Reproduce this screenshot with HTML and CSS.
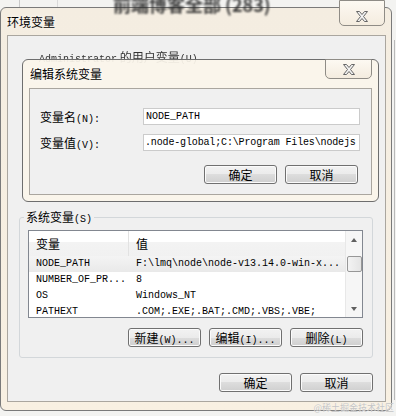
FILE: index.html
```html
<!DOCTYPE html>
<html lang="zh-CN">
<head>
    <meta charset="UTF-8">
    <meta name="viewport" content="width=device-width, initial-scale=1.0">
    <title>环境变量</title>
    <link rel="stylesheet" href="styles.css">
</head>
<body>
    <div class="desk">
        <!-- 背后窗口的模糊文字 -->
        <div class="behind">前端博客全部 (283)</div>

        <!-- 环境变量 窗口 -->
        <div class="win">
            <div class="win_title">环境变量</div>
            <div class="close close_big">
                <svg width="14" height="11" viewBox="0 0 14 11"><path d="M1.5 0.5h3l2.5 3 2.5-3h3l-4 5 4 5h-3l-2.5-3-2.5 3h-3l4-5z" fill="#f2f2f2" stroke="#666" stroke-width="1"/></svg>
            </div>
            <div class="client">
                <div class="user_area">
                    <div class="user_label"><span class="en">Administrator</span> 的用户变量<span class="en">(U)</span></div>
                </div>

                <div class="group">
                    <div class="legend">系统变量<span class="en">(S)</span></div>
                    <div class="list">
                        <div class="list_body">
                            <div class="list_head">
                                <div class="col1">变量</div>
                                <div class="col2">值</div>
                            </div>
                            <div class="row sel">
                                <div class="col1 en">NODE_PATH</div>
                                <div class="col2 en">F:\lmq\node\node-v13.14.0-win-x...</div>
                            </div>
                            <div class="row">
                                <div class="col1 en">NUMBER_OF_PR...</div>
                                <div class="col2 en">8</div>
                            </div>
                            <div class="row">
                                <div class="col1 en">OS</div>
                                <div class="col2 en">Windows_NT</div>
                            </div>
                            <div class="row">
                                <div class="col1 en">PATHEXT</div>
                                <div class="col2 en">.COM;.EXE;.BAT;.CMD;.VBS;.VBE;</div>
                            </div>
                        </div>
                        <div class="scroll">
                            <div class="arrow"><span class="up"></span></div>
                            <div class="thumb"></div>
                            <div class="arrow arrow_down"><span class="down"></span></div>
                        </div>
                    </div>
                    <div class="btns">
                        <div class="btn">新建<span class="en">(W)...</span></div>
                        <div class="btn">编辑<span class="en">(I)...</span></div>
                        <div class="btn">删除<span class="en">(L)</span></div>
                    </div>
                </div>

                <div class="btns btns_bottom">
                    <div class="btn">确定</div>
                    <div class="btn">取消</div>
                </div>
            </div>
        </div>

        <!-- 编辑系统变量 对话框 -->
        <div class="dlg">
            <div class="dlg_title">编辑系统变量</div>
            <div class="close close_small">
                <svg width="14" height="11" viewBox="0 0 14 11"><path d="M1.5 0.5h3l2.5 3 2.5-3h3l-4 5 4 5h-3l-2.5-3-2.5 3h-3l4-5z" fill="#f2f2f2" stroke="#666" stroke-width="1"/></svg>
            </div>
            <div class="dlg_client">
                <div class="field">
                    <div class="field_label">变量名<span class="en">(N):</span></div>
                    <div class="input en">NODE_PATH</div>
                </div>
                <div class="field">
                    <div class="field_label">变量值<span class="en">(V):</span></div>
                    <div class="input input_long en">.node-global;C:\Program Files\nodejs</div>
                </div>
                <div class="btns dlg_btns">
                    <div class="btn">确定</div>
                    <div class="btn">取消</div>
                </div>
            </div>
        </div>

        <div class="mark">@稀土掘金技术社区</div>
    </div>
</body>
</html>
```

FILE: styles.css
```css
body{
    margin: 0;
    font-family: "Noto Sans CJK SC", sans-serif;
    font-size: 12px;
    color: #000;
}
.en{
    font-family: "Liberation Mono", monospace;
    font-size: 10px;
}

.desk{
    position: relative;
    width: 396px;
    height: 416px;
    overflow: hidden;
    background-color: #f3f3f1;
    background-image:
        linear-gradient(#c9c9c9, #c9c9c9),
        linear-gradient(#dadada, #dadada),
        linear-gradient(#b9b9b9, #b9b9b9);
    background-size: 1px 8px, 1px 8px, 1px 360px;
    background-position: 19px 0, 57px 0, 394px 40px;
    background-repeat: no-repeat;
}
.behind{
    position: absolute;
    left: 113px;
    top: -5px;
    z-index: 3;
    font-size: 18px;
    font-weight: bold;
    line-height: 18px;
    color: #2b2b2b;
    white-space: nowrap;
    filter: blur(1.1px);
    opacity: 0.9;
}

/* 窗口 */
.win{
    position: absolute;
    left: 0;
    top: 7px;
    width: 392px;
    height: 404px;
    box-sizing: border-box;
    border: 1px solid #7a7a7a;
    border-radius: 6px;
    background: linear-gradient(#f4ede1, #f8f0e2);
    padding: 0 5px 8px 6px;
    display: flex;
    flex-direction: column;
}
.win_title{
    height: 27px;
    line-height: 27px;
    text-shadow: 0 0 5px #fff;
}
.close{
    position: absolute;
    box-sizing: border-box;
    border: 1px solid #8f8c86;
    border-radius: 0 0 5px 5px;
    background: linear-gradient(#fdf9f2, #f4ecdf);
    display: flex;
    align-items: center;
    justify-content: center;
}
.close_big{
    top: -8px;
    right: 6px;
    width: 46px;
    height: 26px;
    padding-top: 6px;
}
.close_small{
    top: -1px;
    right: 6px;
    width: 47px;
    height: 20px;
}
.client{
    flex: 1;
    box-sizing: border-box;
    background: #f0f0f0;
    border: 1px solid #aaa69f;
    padding: 0 12px 0 11px;
    display: flex;
    flex-direction: column;
}
.user_area{
    height: 181px;
    flex-shrink: 0;
    box-sizing: border-box;
    padding: 13px 0 0 20px;
}
.user_label{
    line-height: 16px;
    color: #333;
    filter: blur(0.6px);
}

/* 系统变量 分组 */
.group{
    position: relative;
    border: 1px solid #d3d7da;
    border-radius: 3px;
    padding: 12px 9px 10px 8px;
}
.legend{
    position: absolute;
    left: 4px;
    top: -8px;
    padding: 0 2px;
    line-height: 14px;
    background: #f0f0f0;
}
.list{
    display: flex;
    height: 88px;
    box-sizing: border-box;
    border: 1px solid #828790;
    background: #fff;
}
.list_body{
    flex: 1;
    overflow: hidden;
}
.list_head{
    display: flex;
    height: 25px;
    line-height: 25px;
    background: linear-gradient(#fff 0, #fff 45%, #f3f3f3 45%, #f1f1f1 100%);
}
.list_head .col1{
    border-right: 1px solid #e2e2e2;
}
.col1{
    width: 92px;
    padding-left: 7px;
    white-space: nowrap;
}
.col2{
    flex: 1;
    padding-left: 7px;
    white-space: nowrap;
    overflow: hidden;
}
.row{
    display: flex;
    height: 16px;
    line-height: 16px;
}
.row .col1{
    width: 93px;
}
.row.sel{
    background: linear-gradient(#f4f4f4, #e9e9e9);
}

.scroll{
    width: 17px;
    box-sizing: border-box;
    border-left: 1px solid #e8e8e8;
    background: #f6f6f6;
    display: flex;
    flex-direction: column;
    align-items: center;
}
.arrow{
    height: 17px;
    width: 100%;
    display: flex;
    align-items: center;
    justify-content: center;
}
.arrow_down{
    margin-top: auto;
}
.up{
    border-left: 3px solid transparent;
    border-right: 3px solid transparent;
    border-bottom: 4px solid #606060;
}
.down{
    border-left: 3px solid transparent;
    border-right: 3px solid transparent;
    border-top: 4px solid #606060;
}
.thumb{
    margin-top: 8px;
    width: 15px;
    height: 16px;
    box-sizing: border-box;
    border: 1px solid #979797;
    border-radius: 2px;
    background: linear-gradient(90deg, #f3f3f3, #e4e4e4);
}

/* 按钮 */
.btns{
    display: flex;
    justify-content: flex-end;
    gap: 8px;
    margin-top: 10px;
}
.btns_bottom{
    margin-top: 15px;
}
.btn{
    width: 73px;
    height: 19px;
    box-sizing: border-box;
    border: 1px solid #707070;
    border-radius: 3px;
    background: linear-gradient(#f2f2f2 0%, #ebebeb 50%, #dddddd 50%, #cfcfcf 100%);
    box-shadow: inset 0 0 0 1px #fbfbfb;
    text-align: center;
    line-height: 17px;
    white-space: nowrap;
}

/* 对话框 */
.dlg{
    position: absolute;
    left: 22px;
    top: 59px;
    width: 357px;
    height: 143px;
    box-sizing: border-box;
    border: 1px solid #6e6e6e;
    border-radius: 6px;
    background: rgba(251, 245, 235, 0.93);
    padding: 0 6px 6px 6px;
    display: flex;
    flex-direction: column;
}
.dlg_title{
    height: 28px;
    line-height: 28px;
    padding-left: 1px;
    text-shadow: 0 0 5px #fff;
}
.dlg_client{
    flex: 1;
    background: #f0f0f0;
    border: 1px solid #aaa69f;
    padding: 19px 11px 0 10px;
}
.field{
    display: flex;
    align-items: center;
    height: 17px;
}
.field + .field{
    margin-top: 9px;
}
.field_label{
    width: 103px;
}
.input{
    flex: 1;
    height: 17px;
    box-sizing: border-box;
    border: 1px solid #cbcbcb;
    background: #fff;
    padding-left: 2px;
    line-height: 15px;
    white-space: nowrap;
    overflow: hidden;
}
.input_long{
    padding-left: 1px;
    letter-spacing: -0.15px;
}
.dlg_btns{
    margin-top: 14px;
    margin-right: 2px;
}

.mark{
    position: absolute;
    right: 2px;
    bottom: 3px;
    font-size: 9px;
    line-height: 10px;
    color: #c4c4c4;
    text-shadow: 0 0 1px #fff;
}
```
